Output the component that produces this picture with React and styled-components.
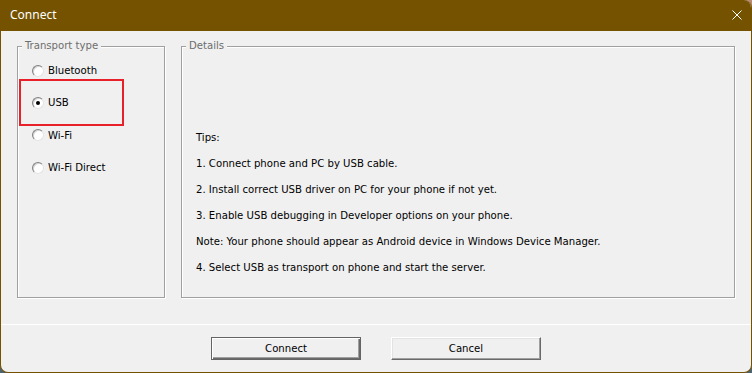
import React from 'react';
import styled, { createGlobalStyle, css } from 'styled-components';

const GlobalStyle = createGlobalStyle`
  html, body {
    margin: 0;
    padding: 0;
    background: linear-gradient(to bottom, #b98a74 0, #b98a74 40px, #4e6373 40px);
  }
  * { box-sizing: border-box; }
`;

const uiFont = `"DejaVu Sans Condensed", "Liberation Sans", Arial, sans-serif`;

const Window = styled.div`
  width: 752px;
  height: 373px;
  display: flex;
  flex-direction: column;
  background: #f0f0f0;
  border: 1px solid #745200;
  border-top: none;
  border-radius: 0 8px 8px 8px;
  overflow: hidden;
  font-family: ${uiFont};
  font-size: 11.25px;
  color: #000;
`;

const TitleBar = styled.div`
  height: 31px;
  flex: 0 0 31px;
  background: #745200;
  display: flex;
  align-items: center;
  justify-content: space-between;
  padding: 0 9px 0 9px;
`;

const Title = styled.span`
  font-family: "Noto Sans", "Open Sans", sans-serif;
  font-size: 12px;
  color: #fff;
  line-height: 1;
  margin-top: -1px;
`;

const CloseButton = styled.div`
  width: 10px;
  height: 10px;
  display: flex;
  margin-top: -1px;
`;

const Body = styled.div`
  display: flex;
  gap: 16px;
  padding: 15px 15px 0 16px;
  height: 267px;
  flex: 0 0 267px;
`;

const Group = styled.div`
  position: relative;
  height: 252px;
  width: ${p => p.$width}px;
  border: 1px solid #a0a0a0;
  box-shadow: 1px 1px 0 #fff, inset 1px 1px 0 #fff;
  padding: ${p => p.$pad};
`;

const Caption = styled.span`
  position: absolute;
  top: -8px;
  left: 4px;
  padding: 0 3px;
  background: #f0f0f0;
  color: #6d6d6d;
  line-height: 14px;
`;

const RadioList = styled.div`
  display: flex;
  flex-direction: column;
`;

const RadioRow = styled.label`
  display: flex;
  align-items: center;
  height: 32.3px;
  gap: 4px;
`;

const RadioDot = styled.span`
  width: 12px;
  height: 12px;
  border-radius: 50%;
  background: #fff;
  border: 1px solid;
  border-color: #808080 #e3e3e3 #e3e3e3 #808080;
  box-shadow: inset 1px 1px 0 #d4d4d4;
  display: flex;
  align-items: center;
  justify-content: center;

  ${p => p.$checked && css`
    &::after {
      content: "";
      width: 4px;
      height: 4px;
      border-radius: 50%;
      background: #000;
    }
  `}
`;

const Highlight = styled.div`
  position: absolute;
  left: 1px;
  top: 32px;
  width: 105px;
  height: 47px;
  border: 2px solid #e8202a;
`;

const TipLine = styled.p`
  margin: 0;
  height: 26px;
  line-height: 26px;
  white-space: nowrap;
`;

const Separator = styled.div`
  height: 1px;
  flex: 0 0 1px;
  background: #fff;
  margin-top: 26px;
`;

const Footer = styled.div`
  display: flex;
  justify-content: center;
  gap: 30px;
  padding-top: 12px;
`;

const Button = styled.button`
  width: 150px;
  height: 23px;
  padding: 0;
  margin: 0;
  background: #f0f0f0;
  font-family: ${uiFont};
  font-size: 11.25px;
  color: #000;
  border: 1px solid;
  border-color: #fff #696969 #696969 #fff;
  box-shadow: inset -1px -1px 0 #a0a0a0, inset 1px 1px 0 #e3e3e3;

  ${p => p.$default && css`
    border: 1px solid #646464;
    box-shadow: inset 1px 1px 0 #fff, inset -1px -1px 0 #696969, inset -2px -2px 0 #a0a0a0;
  `}
`;

const transports = ['Bluetooth', 'USB', 'Wi-Fi', 'Wi-Fi Direct'];

const tips = [
  'Tips:',
  '1. Connect phone and PC by USB cable.',
  '2. Install correct USB driver on PC for your phone if not yet.',
  '3. Enable USB debugging in Developer options on your phone.',
  'Note: Your phone should appear as Android device in Windows Device Manager.',
  '4. Select USB as transport on phone and start the server.',
];

export default function App() {
  return (
    <>
      <GlobalStyle />
      <Window>
        <TitleBar>
          <Title>Connect</Title>
          <CloseButton>
            <svg width="10" height="10" viewBox="0 0 10 10">
              <path d="M0.5 0.5 L9.5 9.5 M9.5 0.5 L0.5 9.5" stroke="#fff" strokeWidth="1" fill="none" />
            </svg>
          </CloseButton>
        </TitleBar>
        <Body>
          <Group $width={148} $pad="7.5px 0 0 14px">
            <Caption>Transport type</Caption>
            <RadioList>
              {transports.map(t => (
                <RadioRow key={t}>
                  <RadioDot $checked={t === 'USB'} />
                  {t}
                </RadioRow>
              ))}
            </RadioList>
            <Highlight />
          </Group>
          <Group $width={554} $pad="77.5px 0 0 14px">
            <Caption>Details</Caption>
            {tips.map(t => (
              <TipLine key={t}>{t}</TipLine>
            ))}
          </Group>
        </Body>
        <Separator />
        <Footer>
          <Button $default>Connect</Button>
          <Button>Cancel</Button>
        </Footer>
      </Window>
    </>
  );
}
